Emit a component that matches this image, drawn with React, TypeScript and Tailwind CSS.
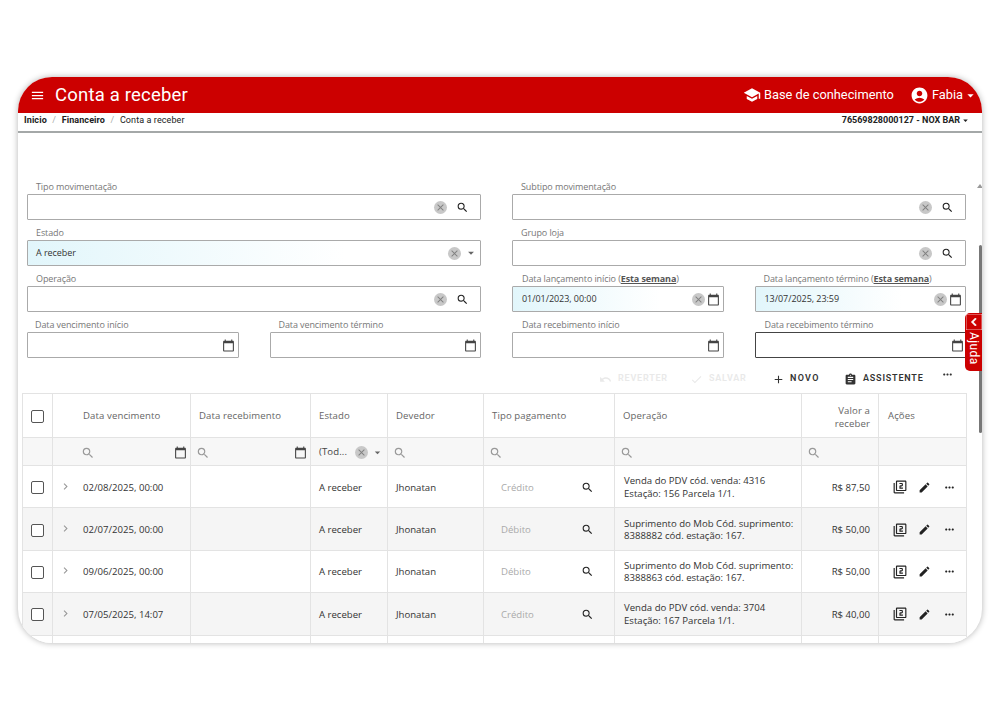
import React from "react";
import {
  MdAccountCircle,
  MdAdd,
  MdArrowDropDown,
  MdAssignment,
  MdCalendarToday,
  MdCheck,
  MdChevronLeft,
  MdChevronRight,
  MdClose,
  MdEdit,
  MdFilter2,
  MdMenu,
  MdMoreHoriz,
  MdOutlineSearch,
  MdSchool,
  MdSearch,
  MdUndo,
} from "react-icons/md";

type FieldProps = {
  label: React.ReactNode;
  value?: string;
  span?: boolean;
  filled?: boolean;
  focused?: boolean;
  labelIndent?: string;
  kind: "search" | "select" | "date" | "dateClear";
};

// gray circle with the x, used on every clearable input
const Clear = ({ className = "" }: { className?: string }) => (
  <span className={`w-[13px] h-[13px] rounded-full bg-[#c8c8c8] flex items-center justify-center shrink-0 ${className}`}>
    <MdClose className="text-[#808080] text-[11px]" />
  </span>
);

const Field = ({ label, value, span, filled, focused, labelIndent = "pl-[9px]", kind }: FieldProps) => (
  <div className={span ? "col-span-2" : "col-span-1"}>
    <div className={`h-[20px] flex items-end text-[9px] leading-[14px] tracking-[-0.1px] text-[#777] ${labelIndent}`}>{label}</div>
    <div
      className={`h-[26px] rounded-[1px] border flex items-center text-[9px] tracking-[-0.05px] text-[#333] ${
        kind === "dateClear" ? "pl-[9px]" : "pl-[8px]"
      } ${focused ? "border-[#444]" : "border-[#aaa]"} ${filled ? "bg-linear-to-r from-[#e2f6fb] to-white to-70%" : "bg-white"}`}
    >
      <span className="flex-1">{value}</span>
      {kind === "search" && (
        <>
          <Clear className="mr-[9px]" />
          <MdSearch className="text-[#222] text-[13px] mr-[11px]" />
        </>
      )}
      {kind === "select" && (
        <>
          <Clear className="mr-[3px]" />
          <MdArrowDropDown className="text-[#666] text-[14px] mr-[2px]" />
        </>
      )}
      {kind === "dateClear" && (
        <>
          <Clear className="mr-[2px]" />
          <MdCalendarToday className="text-[#444] text-[13px] mr-[3px]" />
        </>
      )}
      {kind === "date" && <MdCalendarToday className={`text-[#444] text-[13px] ${focused ? "mr-[1px]" : "mr-[3px]"}`} />}
    </div>
  </div>
);

const Esta = () => <b className="font-bold underline text-[#555]">Esta semana</b>;

type Row = { date: string; pay: string; op1: string; op2: string; value: string };

const rows: Row[] = [
  { date: "02/08/2025, 00:00", pay: "Crédito", op1: "Venda do PDV cód. venda: 4316", op2: "Estação: 156 Parcela 1/1.", value: "R$ 87,50" },
  { date: "02/07/2025, 00:00", pay: "Débito", op1: "Suprimento do Mob Cód. suprimento:", op2: "8388882 cód. estação: 167.", value: "R$ 50,00" },
  { date: "09/06/2025, 00:00", pay: "Débito", op1: "Suprimento do Mob Cód. suprimento:", op2: "8388863 cód. estação: 167.", value: "R$ 50,00" },
  { date: "07/05/2025, 14:07", pay: "Crédito", op1: "Venda do PDV cód. venda: 3704", op2: "Estação: 167 Parcela 1/1.", value: "R$ 40,00" },
];

const cell = "border border-[#e3e3e3] p-0 pt-[2px] align-middle";
const checkbox = "block w-[13px] h-[13px] ml-[8px] rounded-[2px] border border-[#555] bg-white";

const FilterSearch = () => <MdOutlineSearch className="text-[#999] text-[14px] ml-[5px]" />;

export default function App() {
  return (
    <div className="w-[1000px] h-[720px] bg-white pt-[77px] pl-[18px] overflow-hidden font-['Open_Sans',sans-serif]">
      <div className="relative w-[964px] h-[566px] rounded-[34px] overflow-hidden bg-white shadow-[0_0_6px_rgba(0,0,0,0.3)]">
        <header className="h-[36px] bg-[#cc0000] text-white flex items-center font-['Roboto',sans-serif]">
          <MdMenu className="text-[15px] ml-[12px]" />
          <h1 className="ml-[10px] text-[18.5px] tracking-[0.2px] mt-[2px]">Conta a receber</h1>
          <MdSchool className="text-[18px] ml-auto" />
          <span className="ml-[3px] text-[12.8px]">Base de conhecimento</span>
          <MdAccountCircle className="text-[19px] ml-[16px]" />
          <span className="ml-[3px] text-[12.8px]">Fabia</span>
          <MdArrowDropDown className="text-[15px] mr-[4px]" />
        </header>

        <div className="h-[20px] border-b-2 border-[#a4a8a8] flex items-start pt-[1px] pl-[6px] pr-[11px] text-[9px] font-['Roboto',sans-serif] tracking-[0.1px] text-[#222]">
          <b className="font-bold">Inicio</b>
          <span className="mx-[5.5px] text-[#aaa]">/</span>
          <b className="font-bold">Financeiro</b>
          <span className="mx-[5.5px] text-[#aaa]">/</span>
          <span>Conta a receber</span>
          <b className="ml-auto font-bold tracking-normal flex items-center">
            76569828000127 - NOX BAR
            <MdArrowDropDown className="text-[11px]" />
          </b>
        </div>

        <div className="ml-[9px] mt-[41px] w-[939px] grid grid-cols-4 gap-x-[31px]">
          <Field span label="Tipo movimentação" kind="search" />
          <Field span label="Subtipo movimentação" kind="search" />
          <Field span label="Estado" value="A receber" filled kind="select" />
          <Field span label="Grupo loja" kind="search" />
          <Field span label="Operação" kind="search" />
          <Field
            labelIndent="pl-[10px]"
            label={<span>Data lançamento início (<Esta />)</span>}
            value="01/01/2023, 00:00"
            filled
            kind="dateClear"
          />
          <Field
            labelIndent="pl-[9px]"
            label={<span>Data lançamento término (<Esta />)</span>}
            value="13/07/2025, 23:59"
            filled
            kind="dateClear"
          />
          <Field labelIndent="pl-[8px]" label="Data vencimento início" kind="date" />
          <Field labelIndent="pl-[9px]" label="Data vencimento término" kind="date" />
          <Field labelIndent="pl-[10px]" label="Data recebimento início" kind="date" />
          <Field labelIndent="pl-[10px]" label="Data recebimento término" focused kind="date" />
        </div>

        <div className="h-[35px] flex items-center pt-[7px] pl-[581px] text-[9px] font-semibold tracking-[0.8px] font-['Roboto',sans-serif]">
          <div className="flex items-center gap-[6px] w-[91px] text-[#e9e9e9]">
            <MdUndo className="text-[13px]" />
            REVERTER
          </div>
          <div className="flex items-center gap-[6px] w-[82px] text-[#e9e9e9]">
            <MdCheck className="text-[13px]" />
            SALVAR
          </div>
          <div className="flex items-center gap-[5px] w-[72px] text-[#333] tracking-[1.3px]">
            <MdAdd className="text-[13px]" />
            NOVO
          </div>
          <div className="flex items-center gap-[6px] w-[97px] text-[#333]">
            <MdAssignment className="text-[13px]" />
            ASSISTENTE
          </div>
          <MdMoreHoriz className="text-[13px] text-[#333] -mt-[9px]" />
        </div>

        <table className="ml-[4px] w-[944px] table-fixed border-collapse text-[9.6px] text-[#333]">
          <colgroup>
            <col className="w-[30px]" />
            <col className="w-[138px]" />
            <col className="w-[120px]" />
            <col className="w-[77px]" />
            <col className="w-[96px]" />
            <col className="w-[131px]" />
            <col className="w-[187px]" />
            <col className="w-[77px]" />
            <col className="w-[88px]" />
          </colgroup>
          <thead className="text-[#666] font-normal tracking-[0.1px]">
            <tr className="h-[44px]">
              <th className={cell}>
                <span className={checkbox} />
              </th>
              <th className={`${cell} font-normal text-left pl-[30px]`}>Data vencimento</th>
              <th className={`${cell} font-normal text-left pl-[8px]`}>Data recebimento</th>
              <th className={`${cell} font-normal text-left pl-[8px]`}>Estado</th>
              <th className={`${cell} font-normal text-left pl-[8px]`}>Devedor</th>
              <th className={`${cell} font-normal text-left pl-[8px]`}>Tipo pagamento</th>
              <th className={`${cell} font-normal text-left pl-[8px]`}>Operação</th>
              <th className={`${cell} font-normal text-right pr-[8px] leading-[13px]`}>
                Valor a
                <br />
                receber
              </th>
              <th className={`${cell} font-normal text-left pl-[9px]`}>Ações</th>
            </tr>
            <tr className="h-[28px] bg-[#f7f7f7]">
              <td className={cell} />
              <td className={cell}>
                <div className="flex items-center pl-[28px] pr-[3px]">
                  <MdOutlineSearch className="text-[#999] text-[14px]" />
                  <MdCalendarToday className="text-[#444] text-[13px] ml-auto" />
                </div>
              </td>
              <td className={cell}>
                <div className="flex items-center pr-[3px]">
                  <FilterSearch />
                  <MdCalendarToday className="text-[#444] text-[13px] ml-auto" />
                </div>
              </td>
              <td className={cell}>
                <div className="flex items-center pl-[8px] text-[#444]">
                  <span className="flex-1">(Tod...</span>
                  <Clear />
                  <MdArrowDropDown className="text-[#666] text-[13px] mx-[3px]" />
                </div>
              </td>
              <td className={cell}>
                <FilterSearch />
              </td>
              <td className={cell}>
                <FilterSearch />
              </td>
              <td className={cell}>
                <FilterSearch />
              </td>
              <td className={cell}>
                <FilterSearch />
              </td>
              <td className={cell} />
            </tr>
          </thead>
          <tbody>
            {rows.map((r, i) => (
              <tr key={r.date} className={`h-[42.4px] ${i % 2 === 1 ? "bg-[#f5f5f5]" : "bg-white"}`}>
                <td className={cell}>
                  <span className={checkbox} />
                </td>
                <td className={cell}>
                  <div className="flex items-center">
                    <MdChevronRight className="text-[#999] text-[13px] ml-[6px] mr-[11px] -mt-[3px]" />
                    {r.date}
                  </div>
                </td>
                <td className={cell} />
                <td className={`${cell} pl-[8px]`}>A receber</td>
                <td className={`${cell} pl-[8px]`}>Jhonatan</td>
                <td className={cell}>
                  <div className="flex items-center pl-[17px] pr-[20px] text-[#aaa]">
                    <span className="flex-1">{r.pay}</span>
                    <MdSearch className="text-[#222] text-[13px] -mt-[1px]" />
                  </div>
                </td>
                <td className={`${cell} pl-[9px] leading-[12.5px]`}>
                  {r.op1}
                  <br />
                  {r.op2}
                </td>
                <td className={`${cell} text-right pr-[8px]`}>{r.value}</td>
                <td className={cell}>
                  <div className="flex items-center pl-[14px] gap-[11px] text-[#222] -mt-[1px]">
                    <MdFilter2 className="text-[14px]" />
                    <MdEdit className="text-[13px]" />
                    <MdMoreHoriz className="text-[13px] ml-[1px]" />
                  </div>
                </td>
              </tr>
            ))}
            <tr className="h-[42px] bg-white">
              <td className={cell} />
              <td className={cell} />
              <td className={cell} />
              <td className={cell} />
              <td className={cell} />
              <td className={cell} />
              <td className={cell} />
              <td className={cell} />
              <td className={cell} />
            </tr>
          </tbody>
        </table>

        {/* scrollbar */}
        <div className="absolute right-0 top-[168px] w-[3px] h-[188px] bg-[#777] rounded-full" />
        <div className="absolute -right-[1px] top-[107px] w-0 h-0 border-x-[3px] border-x-transparent border-b-[4px] border-b-[#999]" />

        {/* ajuda */}
        <div className="absolute right-0 top-[236px] w-[17px] h-[58px] bg-[#cc0000] rounded-l-[5px] text-white flex flex-col items-center font-['Roboto',sans-serif]">
          <MdChevronLeft className="text-[16px] mt-[1px] shrink-0 stroke-1" />
          <span className="[writing-mode:vertical-rl] text-[12px] leading-[17px] tracking-[0.4px] mt-[2px]">Ajuda</span>
        </div>
      </div>
    </div>
  );
}
